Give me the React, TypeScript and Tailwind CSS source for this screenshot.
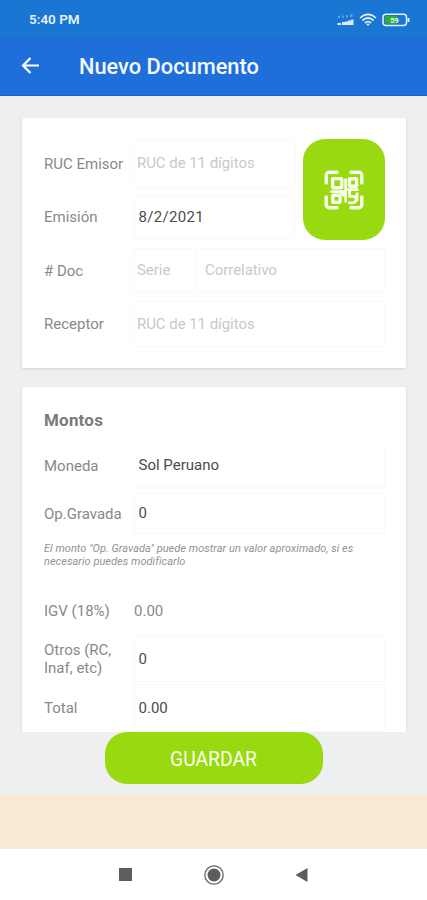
import type { ReactNode } from 'react';

function StatusBar() {
  return (
    <div className="h-[35px] shrink-0 bg-[#1976d2] pl-[29px] pr-[17px] pt-[4px] flex items-center justify-between text-white">
      <span className="text-[13.5px] font-semibold text-[#e4f1fc]">5:40 PM</span>
      <div className="flex items-center">
        <svg className="w-[17px] h-[14px] mr-[5px]" viewBox="0 0 17 14" fill="white">
          <g opacity="0.3">
            <rect x="1" y="3" width="2" height="2" />
            <rect x="5" y="2.5" width="2" height="2" />
            <rect x="9" y="2" width="2" height="2.5" />
            <rect x="13" y="1" width="2.5" height="3" />
          </g>
          <g opacity="0.85">
            <rect x="0.5" y="10" width="3.5" height="2" />
            <rect x="5" y="9" width="3" height="3" />
            <rect x="8" y="8.5" width="3" height="3.5" />
            <rect x="11" y="7.5" width="3" height="4.5" />
            <rect x="14" y="6.5" width="2.5" height="5.5" />
          </g>
        </svg>
        <svg className="w-[18px] h-[14px] mr-[5px]" viewBox="0 0 18 14" fill="none" stroke="#e4f1fc" strokeWidth="1.7">
          <path d="M1 5 Q9 -2.4 17 5" />
          <path d="M3.4 7.5 Q9 2.5 14.6 7.5" />
          <path d="M6 10 Q9 7.3 12 10" />
          <path d="M9 13 L7.4 11.2 Q9 10 10.6 11.2 Z" fill="#e4f1fc" stroke="none" />
        </svg>
        <svg className="w-[28px] h-[14px]" viewBox="0 0 28 14">
          <rect x="1" y="1.2" width="23.5" height="11.3" rx="3" fill="none" stroke="#e4f1fc" strokeWidth="1.5" />
          <rect x="3" y="3" width="12" height="7.8" rx="1" fill="#2fae3d" />
          <rect x="25.5" y="5" width="2" height="4" rx="0.8" fill="#e4f1fc" />
          <text x="12.6" y="9.6" textAnchor="middle" fontSize="7.5" fontWeight="700" fill="#e4f5e4" fontFamily="Roboto, sans-serif">59</text>
        </svg>
      </div>
    </div>
  );
}

function ScanIcon() {
  return (
    <svg className="w-[40px] h-[40px]" viewBox="0 0 40 40" fill="none" stroke="#fafff0" strokeWidth="3.4">
      <path strokeLinecap="round" strokeLinejoin="round" strokeWidth="3.4" d="M2.2 13V5.2a3 3 0 0 1 3-3H13M27 2.2h7.8a3 3 0 0 1 3 3V13M37.8 27v7.8a3 3 0 0 1-3 3H27M13 37.8H5.2a3 3 0 0 1-3-3V27" />
      <rect x="8.6" y="8.6" width="9.2" height="9.2" rx="1" />
      <rect x="25.4" y="8.8" width="7.2" height="7.4" rx="1" />
      <rect x="8.8" y="25.2" width="7.2" height="7.2" rx="1.5" />
      <path strokeWidth="2.6" d="M21.6 8.5V32.5M6.5 21.6H22M16.5 22l5 5" />
      <path strokeWidth="2.8" d="M22 19.6H34.5M25.6 19.6V26.4H29a3.2 3.2 0 0 1 0 6.4h-4.8M33 22.5V31" />
    </svg>
  );
}

function Row({ label, className, children }: { label: string; className: string; children: ReactNode }) {
  return (
    <div className={`flex items-center ${className}`}>
      <div className="w-[89px] shrink-0 pr-1 text-[15px] leading-[18px] text-[#898989]">{label}</div>
      {children}
    </div>
  );
}

function Field({ value, placeholder, className }: { value?: string; placeholder?: string; className: string }) {
  return (
    <div className={`flex items-center border border-[#f9f9f9] text-[15px] ${className}`}>
      {value ? <span className="pl-[3.5px] text-[#4c4c4c]">{value}</span> : <span className="pl-[3px] text-[#c9c9c9] tracking-[-0.05px]">{placeholder}</span>}
    </div>
  );
}

export default function App() {
  return (
    <div className="w-[427px] h-[900px] flex flex-col overflow-hidden bg-[#eeeff1] font-['Roboto',sans-serif]">
      <StatusBar />

      {/* App bar */}
      <header className="h-[61px] shrink-0 bg-[#1f6fdb] border-b border-[#1763c4] flex items-center pl-[21px] text-white">
        <svg className="w-[19px] h-[17px]" viewBox="0 0 19 17" fill="none" stroke="white" strokeWidth="2.2">
          <path d="M18 8.5H2M9.5 1L2 8.5L9.5 16" />
        </svg>
        <h1 className="ml-[39px] mt-[5px] text-[21.8px] font-medium text-[#f4f8fe]">Nuevo Documento</h1>
      </header>

      <main className="h-[636px] shrink-0 overflow-hidden pt-[22px] px-[22px]">
        {/* Documento */}
        <section className="w-[384px] h-[250px] bg-white rounded-[2px] shadow-[0_1px_3px_rgba(0,0,0,0.13)] pl-[22px] pt-[21px]">
          <div className="flex">
            <div className="w-[259px]">
              <Row label="RUC Emisor" className="h-[49px]">
                <Field placeholder="RUC de 11 dígitos" className="w-[163px] h-[48px]" />
              </Row>
              <Row label="Emisión" className="h-[44px] mt-[7px]">
                <Field value="8/2/2021" className="w-[161px] h-[44px] ml-[1px] tracking-[0.3px]" />
              </Row>
            </div>
            <button className="w-[82px] h-[101px] rounded-[22px] bg-[#98d90f] flex items-center justify-center" aria-label="Escanear">
              <ScanIcon />
            </button>
          </div>
          <Row label="# Doc" className="h-[45px] mt-[8px]">
            <Field placeholder="Serie" className="w-[62px] h-[45px]" />
            <Field placeholder="Correlativo" className="w-[189px] h-[45px] ml-[1px] pl-[5px]" />
          </Row>
          <Row label="Receptor" className="h-[46px] mt-[8px]">
            <Field placeholder="RUC de 11 dígitos" className="w-[252px] h-[46px]" />
          </Row>
        </section>

        {/* Montos */}
        <section className="w-[384px] h-[380px] mt-[19px] bg-white rounded-[2px] shadow-[0_1px_3px_rgba(0,0,0,0.13)] pl-[22px] pt-[21px]">
          <h2 className="h-[24px] leading-[25px] text-[17px] font-bold text-[#7a7a7a] tracking-[0.2px]">Montos</h2>
          <Row label="Moneda" className="h-[43px] mt-[12px]">
            <Field value="Sol Peruano" className="w-[251px] h-[43px] ml-[1px] border-t-transparent border-l-transparent" />
          </Row>
          <Row label="Op.Gravada" className="h-[41px] mt-[6px]">
            <Field value="0" className="w-[251px] h-[41px] ml-[1px]" />
          </Row>
          <p className="mt-[8px] w-[330px] text-[11px] leading-[13px] italic text-[#929292] tracking-[0.03px]">
            El monto "Op. Gravada" puede mostrar un valor aproximado, si es<br />necesario puedes modificarlo
          </p>
          <Row label="IGV (18%)" className="h-[40px] mt-[23px]">
            <span className="pl-[1px] text-[15px] text-[#898989]">0.00</span>
          </Row>
          <Row label="Otros (RC, Inaf, etc)" className="h-[46px] mt-[5px]">
            <Field value="0" className="w-[251px] h-[46px] ml-[1px]" />
          </Row>
          <Row label="Total" className="h-[48px] mt-[2px]">
            <Field value="0.00" className="w-[251px] h-[48px] ml-[1px]" />
          </Row>
        </section>
      </main>

      <footer className="h-[63px] shrink-0 flex justify-center items-start">
        <button className="w-[218px] h-[52px] rounded-[22px] bg-[#98d90f] text-[#fbfff2] text-[19.3px] pt-[4px]">GUARDAR</button>
      </footer>

      {/* Banner */}
      <div className="h-[54px] shrink-0 bg-[#faead5]" />

      {/* System navigation */}
      <nav className="h-[51px] shrink-0 bg-white flex items-center pl-[119px]">
        <div className="w-[13px] h-[13px] bg-[#5d5d5d]" />
        <svg className="w-[20px] h-[20px] ml-[72px]" viewBox="0 0 20 20">
          <circle cx="10" cy="10" r="9.2" fill="none" stroke="#666" strokeWidth="1.3" />
          <circle cx="10" cy="10" r="6.5" fill="#5d5d5d" />
        </svg>
        <svg className="w-[13px] h-[14px] ml-[71px]" viewBox="0 0 13 14">
          <path d="M0.5 7L12.5 0V14Z" fill="#5d5d5d" />
        </svg>
      </nav>
    </div>
  );
}
